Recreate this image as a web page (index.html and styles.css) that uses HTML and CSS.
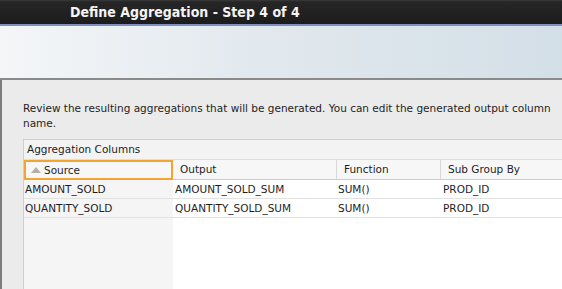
FILE: index.html
```html
<!DOCTYPE html>
<html>
<head>
<meta charset="utf-8">
<link rel="stylesheet" href="styles.css">
</head>
<body>
<div class="titlebar"><span class="title">Define Aggregation - Step 4 of 4</span></div>
<div class="banner"></div>
<div class="body">
  <p class="intro">Review the resulting aggregations that will be generated. You can edit the generated output column name.</p>
  <div class="panel">
    <div class="panel-title">Aggregation Columns</div>
    <div class="table">
      <div class="row head">
        <div class="cell c1 sorted"><svg class="sort" width="10" height="6" viewBox="0 0 10 6"><polygon points="5,0 10,6 0,6" fill="#b5b0a0"/></svg>Source</div>
        <div class="cell c2">Output</div>
        <div class="cell c3">Function</div>
        <div class="cell c4">Sub Group By</div>
      </div>
      <div class="row">
        <div class="cell c1">AMOUNT_SOLD</div>
        <div class="cell c2">AMOUNT_SOLD_SUM</div>
        <div class="cell c3">SUM()</div>
        <div class="cell c4">PROD_ID</div>
      </div>
      <div class="row">
        <div class="cell c1">QUANTITY_SOLD</div>
        <div class="cell c2">QUANTITY_SOLD_SUM</div>
        <div class="cell c3">SUM()</div>
        <div class="cell c4">PROD_ID</div>
      </div>
      <div class="row filler">
        <div class="cell c1"></div>
        <div class="cell c2 rest"></div>
      </div>
    </div>
  </div>
</div>
</body>
</html>
```
FILE: styles.css
```css
html, body { margin: 0; padding: 0; }
body {
  width: 562px;
  height: 289px;
  overflow: hidden;
  background: #ebebeb;
  font-family: "DejaVu Sans", sans-serif;
}
.titlebar {
  height: 24px;
  background: linear-gradient(#3a3a3a 0, #262626 2px, #1c1c1c 100%);
  border-bottom: 2px solid #7f8fbf;
  padding-left: 70px;
  display: flex;
  align-items: center;
}
.title {
  color: #f4f4f4;
  font-family: "DejaVu Sans Condensed", "DejaVu Sans", sans-serif;
  font-stretch: condensed;
  font-weight: bold;
  font-size: 14px;
}
.banner {
  height: 52px;
  background: linear-gradient(90deg, #f4f6f8 0%, #e2e9ee 45%, #d3dfe7 100%);
  border-bottom: 2px solid #8a8a8a;
}
.body {
  border-left: 2px solid #7c7c7c;
  height: 209px;
  overflow: hidden;
  padding: 21px 0 0 21px;
  box-sizing: border-box;
}
.intro {
  margin: 0 0 8px 0;
  font-size: 10.5px;
  line-height: 15px;
  color: #1e1e1e;
  width: 535px;
}
.panel {
  border-top: 1px solid #cfcfcf;
  border-left: 1px solid #cfcfcf;
  background: #f3f3f3;
  height: 200px;
  overflow: hidden;
}
.panel-title {
  font-size: 10.5px;
  line-height: 19px;
  padding-left: 3px;
  color: #1e1e1e;
  border-bottom: 1px solid #dedede;
}
.table { display: flex; flex-direction: column; }
.row { display: flex; height: 19px; }
.row.head { height: 20px; }
.cell {
  flex: 0 0 auto;
  font-size: 10.5px;
  color: #1e1e1e;
  line-height: 18px;
  padding-left: 1px;
  box-sizing: border-box;
  border-bottom: 1px solid #e2e2e2;
  background: #fff;
  white-space: nowrap;
}
.c1 { width: 149px; background: #f5f5f5; }
.c2 { width: 164px; padding-left: 2px; }
.c3 { width: 104px; }
.c4 { width: 130px; padding-left: 2px; }
.head .cell {
  background: #f7f7f7;
  border-right: 1px solid #d8d8d8;
  border-bottom: 1px solid #cdcdcd;
  padding-left: 7px;
  line-height: 18px;
}
.head .c1.sorted {
  border: 2px solid #f2a531;
  line-height: 16px;
  padding-left: 5px;
  display: flex;
  align-items: center;
  gap: 3px;
}
.sort { display: block; }
.filler { height: 80px; }
.filler .cell { border-bottom: none; height: 80px; }
.filler .rest { width: 420px; }
```
